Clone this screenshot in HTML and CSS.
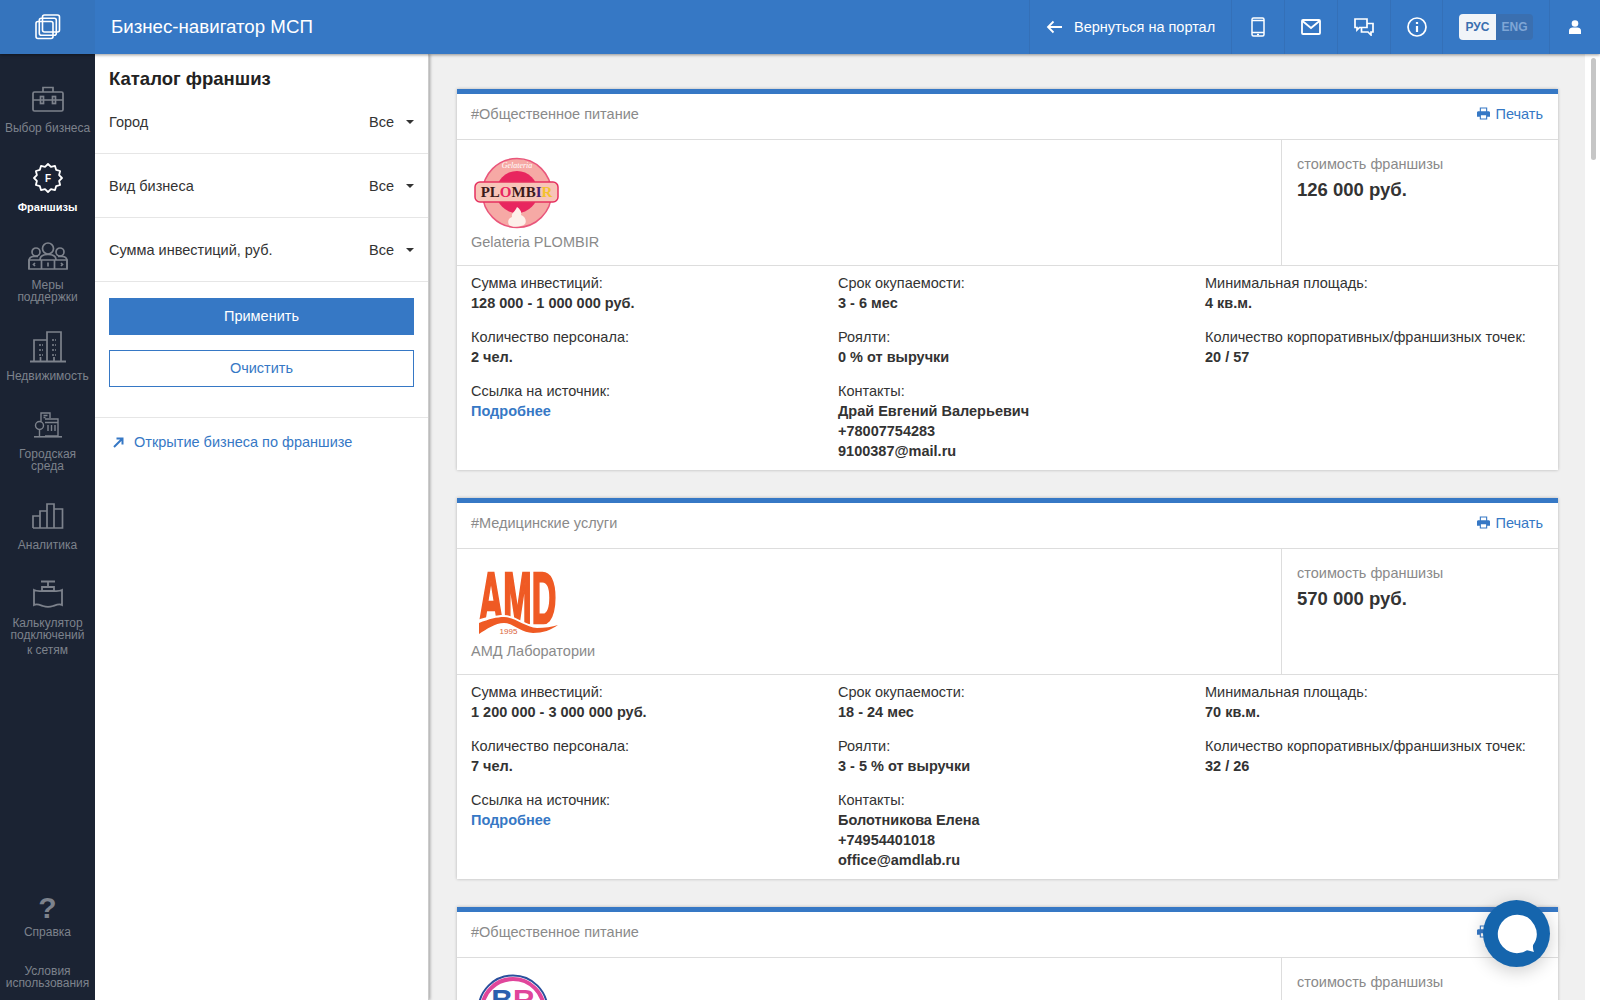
FILE: index.html
```html
<!DOCTYPE html>
<html lang="ru">
<head>
    <meta charset="UTF-8" />
    <title>Бизнес-навигатор МСП</title>
    <link rel="stylesheet" href="styles.css">
</head>
<body>
    <header class="topbar">
        <div class="brand">
            <svg width="26" height="26" viewBox="0 0 26 26" fill="none" stroke="#fff" stroke-width="1.6">
                <rect x="7.5" y="1" width="17" height="17" rx="2"/>
                <rect x="4.3" y="4.2" width="17" height="17" rx="2"/>
                <rect x="1" y="7.5" width="17" height="17" rx="2"/>
            </svg>
        </div>
        <div class="app-title">Бизнес-навигатор МСП</div>
        <a class="back-link">
            <svg width="16" height="14" viewBox="0 0 16 14" fill="none" stroke="#fff" stroke-width="1.8">
                <path d="M16 7H2M7.500 1.500 2 7l5.500 5.500"/>
            </svg>
            <span>Вернуться на портал</span>
        </a>
        <div class="top-icon top-icon-phone">
            <svg width="14" height="20" viewBox="0 0 14 20" fill="none" stroke="#fff" stroke-width="1.5">
                <rect x="1" y="1" width="12" height="18" rx="1.500"/>
                <path d="M1 3.500h12M1 15.500h12"/>
                <path d="M6 17.500h2"/>
            </svg>
        </div>
        <div class="top-icon">
            <svg width="20" height="16" viewBox="0 0 20 16" fill="none" stroke="#fff" stroke-width="1.8">
                <rect x="1" y="1" width="18" height="14" rx="1"/>
                <path d="M1.500 2 10 9l8.500-7"/>
            </svg>
        </div>
        <div class="top-icon">
            <svg width="20" height="18" viewBox="0 0 20 18" fill="none" stroke="#fff" stroke-width="1.7">
                <path d="M1 1h12v8.500H5.500L3 12V9.500H1z"/>
                <path d="M13 5.500h6v8.500h-2v3l-3-3H7.500V9.500"/>
            </svg>
        </div>
        <div class="top-icon top-icon-info">
            <svg width="20" height="20" viewBox="0 0 20 20" fill="none" stroke="#fff" stroke-width="1.7">
                <circle cx="10" cy="10" r="9"/>
                <path d="M10 9v6" stroke-width="2.200"/>
                <path d="M10 5v2" stroke-width="2.200"/>
            </svg>
        </div>
        <div class="lang">
            <span class="lang-item lang-active">РУС</span>
            <span class="lang-item">ENG</span>
        </div>
        <div class="top-user">
            <svg width="12" height="14" viewBox="0 0 12 14" fill="#fff">
                <circle cx="6" cy="3.500" r="3.300"/>
                <path d="M0 14v-3.500C0 8.500 2 7.500 3.500 7.500h5C10 7.500 12 8.500 12 10.500V14z"/>
            </svg>
        </div>
    </header>

    <div class="layout">
        <nav class="sidebar">
            <div class="nav-top">
                <a class="nav-item">
                    <div class="nav-icon">
                        <svg width="32" height="26" viewBox="0 0 32 26" fill="none" stroke="currentColor" stroke-width="1.700">
                            <rect x="1" y="6" width="30" height="19" rx="1.500"/>
                            <path d="M11 6V1.500h10V6M1 14h30"/>
                            <rect x="8.500" y="10.500" width="3" height="7"/>
                            <rect x="20.500" y="10.500" width="3" height="7"/>
                        </svg>
                    </div>
                    <div class="nav-label">Выбор бизнеса</div>
                </a>
                <a class="nav-item nav-active">
                    <div class="nav-icon">
                        <svg width="32" height="32" viewBox="-16 -16 32 32">
                            <polygon fill="none" stroke="currentColor" stroke-width="1.800" stroke-linejoin="round" points="0,-14 2.980,-11.110 7,-12.120 8.130,-8.130 12.120,-7 11.110,-2.980 14,0 11.110,2.980 12.120,7 8.130,8.130 7,12.120 2.980,11.110 0,14 -2.980,11.110 -7,12.120 -8.130,8.130 -12.120,7 -11.110,2.980 -14,0 -11.110,-2.980 -12.120,-7 -8.130,-8.130 -7,-12.120 -2.980,-11.110"/>
                            <text class="badge-letter" x="0" y="4" text-anchor="middle">F</text>
                        </svg>
                    </div>
                    <div class="nav-label">Франшизы</div>
                </a>
                <a class="nav-item">
                    <div class="nav-icon">
                        <svg width="40" height="28" viewBox="0 0 40 28" fill="none" stroke="currentColor" stroke-width="1.700">
                            <circle cx="20" cy="6.500" r="5.500"/>
                            <circle cx="8" cy="10" r="4"/>
                            <circle cx="32" cy="10" r="4"/>
                            <path d="M1 27v-8c0-3 2-4.500 5-4.500h4M39 27v-8c0-3-2-4.500-5-4.500h-4M12 18c0-4 3-5.500 8-5.500s8 1.500 8 5.500"/>
                            <path d="M1 18h38v9H1zM13.500 18v9M26.500 18v9"/>
                            <path d="M7 21l-1.500 1.500L7 24M33 21l1.500 1.500L33 24M20 20.500v4"/>
                        </svg>
                    </div>
                    <div class="nav-label">Меры<br>поддержки</div>
                </a>
                <a class="nav-item">
                    <div class="nav-icon">
                        <svg width="36" height="32" viewBox="0 0 36 32" fill="none" stroke="currentColor" stroke-width="1.700">
                            <path d="M4 30V9h13M17 30V1h14v29"/>
                            <path d="M0 30.500h36" stroke-width="2"/>
                            <path d="M9 14h4M9 19h4M9 24h4M22 9h4M22 14h4M22 19h4M22 24h4" stroke-dasharray="2 1"/>
                            <path d="M10.500 26v4M24 26v4"/>
                        </svg>
                    </div>
                    <div class="nav-label">Недвижимость</div>
                </a>
                <a class="nav-item">
                    <div class="nav-icon">
                        <svg width="28" height="26" viewBox="0 0 28 26" fill="none" stroke="currentColor" stroke-width="1.400">
                            <path d="M7 9V1h9v5"/>
                            <path d="M9.500 3.500h4M9.500 5.500h2"/>
                            <circle cx="5.500" cy="13.500" r="4"/>
                            <path d="M5.500 17.500V24"/>
                            <path d="M11 7h13v17H11M11 10.500h13"/>
                            <path d="M14 13v6M17.500 13v6M21 13v6"/>
                            <path d="M0 24.800h28" stroke-width="1.600"/>
                        </svg>
                    </div>
                    <div class="nav-label">Городская<br>среда</div>
                </a>
                <a class="nav-item">
                    <div class="nav-icon">
                        <svg width="32" height="26" viewBox="0 0 32 26" fill="none" stroke="currentColor" stroke-width="1.700">
                            <path d="M1 25V13h7v12M8 25V8h7v17M15 25V1h7v24M22 25V6h8.500v19zM1 25h30"/>
                        </svg>
                    </div>
                    <div class="nav-label">Аналитика</div>
                </a>
                <a class="nav-item">
                    <div class="nav-icon">
                        <svg width="30" height="28" viewBox="0 0 30 28" fill="none" stroke="currentColor" stroke-width="1.800">
                            <path d="M8 1.500h14M15 1.500V7M9 7h12v4H9z"/>
                            <path d="M1 10v15c3-1.500 6 0 9 1 3 1 7 1 10 0 3-1 6-2.500 9-1V10c-3 1.500-6 1-8 1H9c-2 0-5 .500-8-1z"/>
                        </svg>
                    </div>
                    <div class="nav-label">Калькулятор<br>подключений<span class="nav-label-last">к сетям</span></div>
                </a>
            </div>
            <div class="nav-bottom">
                <a class="nav-help">
                    <div class="help-mark">?</div>
                    <div class="nav-label">Справка</div>
                </a>
                <a class="nav-terms">Условия<br>использования</a>
            </div>
        </nav>

        <aside class="panel">
            <h1 class="panel-title">Каталог франшиз</h1>
            <div class="filter">
                <span>Город</span>
                <span class="filter-value">Все<i class="caret"></i></span>
            </div>
            <div class="filter">
                <span>Вид бизнеса</span>
                <span class="filter-value">Все<i class="caret"></i></span>
            </div>
            <div class="filter">
                <span>Сумма инвестиций, руб.</span>
                <span class="filter-value">Все<i class="caret"></i></span>
            </div>
            <div class="panel-actions">
                <button class="btn-apply">Применить</button>
                <button class="btn-clear">Очистить</button>
            </div>
            <a class="panel-link">
                <svg width="11" height="11" viewBox="0 0 11 11" fill="none" stroke="#3678c5" stroke-width="2">
                    <path d="M1 10 9 2M3.500 1.500h6v6"/>
                </svg>
                <span>Открытие бизнеса по франшизе</span>
            </a>
        </aside>

        <main class="content">
            <section class="card">
                <div class="card-head">
                    <span class="card-tag">#Общественное питание</span>
                    <a class="print">
                        <svg width="13" height="13" viewBox="0 0 14 13" fill="#3678c5">
                            <path d="M3 0h8v4H9.800V1.200H4.200V4H3zM0 5.500C0 4.700.6 4 1.500 4h11c.8 0 1.500.7 1.500 1.500V10h-3v3H3v-3H0zM4.200 8.500v3.300h5.600V8.500z"/>
                        </svg>
                        Печать
                    </a>
                </div>
                <div class="card-top">
                    <div class="card-brand">
                        <svg class="brand-logo" width="90" height="76" viewBox="0 0 90 76">
                            <circle cx="46" cy="39" r="34.500" fill="#f6a9a5" stroke="#e9567b" stroke-width="1.500"/>
                            <circle cx="46" cy="38" r="21" fill="#e8265f"/>
                            <text class="plombir-script" x="46" y="14" text-anchor="middle">Gelateria</text>
                            <rect x="4" y="28" width="83" height="20" rx="5" fill="#f8c4b8" stroke="#e5305f" stroke-width="1.500"/>
                            <text class="plombir-word" x="45.500" y="43" text-anchor="middle"><tspan fill="#3c1a1a">PL</tspan><tspan fill="#e8265f">O</tspan><tspan fill="#3c1a1a">MB</tspan><tspan fill="#43206f">I</tspan><tspan fill="#f2c230">R</tspan></text>
                            <path d="M38 71c-2-4 0-7 3-8-1-4 3-5 5-10 3 2 5 5 4 8 4 1 6 6 4 9-3 3-13 4-16 1z" fill="#fdf0ea"/>
                        </svg>
                        <div class="brand-name">Gelateria PLOMBIR</div>
                    </div>
                    <div class="card-price">
                        <div class="price-label">стоимость франшизы</div>
                        <div class="price-value">126 000 руб.</div>
                    </div>
                </div>
                <div class="card-details">
                    <div class="detail"><div>Сумма инвестиций:</div><b>128 000 - 1 000 000 руб.</b></div>
                    <div class="detail"><div>Срок окупаемости:</div><b>3 - 6 мес</b></div>
                    <div class="detail"><div>Минимальная площадь:</div><b>4 кв.м.</b></div>
                    <div class="detail"><div>Количество персонала:</div><b>2 чел.</b></div>
                    <div class="detail"><div>Роялти:</div><b>0 % от выручки</b></div>
                    <div class="detail"><div>Количество корпоративных/франшизных точек:</div><b>20 / 57</b></div>
                    <div class="detail"><div>Ссылка на источник:</div><a class="more">Подробнее</a></div>
                    <div class="detail"><div>Контакты:</div><b>Драй Евгений Валерьевич</b><b>+78007754283</b><b>9100387@mail.ru</b></div>
                </div>
            </section>

            <section class="card">
                <div class="card-head">
                    <span class="card-tag">#Медицинские услуги</span>
                    <a class="print">
                        <svg width="13" height="13" viewBox="0 0 14 13" fill="#3678c5">
                            <path d="M3 0h8v4H9.800V1.200H4.200V4H3zM0 5.500C0 4.700.6 4 1.500 4h11c.8 0 1.500.7 1.500 1.500V10h-3v3H3v-3H0zM4.200 8.500v3.300h5.600V8.500z"/>
                        </svg>
                        Печать
                    </a>
                </div>
                <div class="card-top">
                    <div class="card-brand">
                        <svg class="brand-logo" width="90" height="76" viewBox="0 0 90 76">
                            <text class="amd-word" x="0" y="0" text-anchor="middle" transform="translate(46.500 60) scale(1 2.100)">AMD</text>
                            <path d="M0 76V59C14 54 25 52 33 52c11 0 21 10 33 11 8 0 15-1 24-5v18z" fill="#fff"/>
                            <path d="M8 60C18 56 26 54 33 54c11 0 21 10 33 11 8 0 15-1 21-3-7 5-15 8-25 8-12 0-20-10-29-10-9 0-17 6-25 11z" fill="#ef5a24"/>
                            <text class="amd-year" x="37.500" y="71" text-anchor="middle">1995</text>
                        </svg>
                        <div class="brand-name">АМД Лаборатории</div>
                    </div>
                    <div class="card-price">
                        <div class="price-label">стоимость франшизы</div>
                        <div class="price-value">570 000 руб.</div>
                    </div>
                </div>
                <div class="card-details">
                    <div class="detail"><div>Сумма инвестиций:</div><b>1 200 000 - 3 000 000 руб.</b></div>
                    <div class="detail"><div>Срок окупаемости:</div><b>18 - 24 мес</b></div>
                    <div class="detail"><div>Минимальная площадь:</div><b>70 кв.м.</b></div>
                    <div class="detail"><div>Количество персонала:</div><b>7 чел.</b></div>
                    <div class="detail"><div>Роялти:</div><b>3 - 5 % от выручки</b></div>
                    <div class="detail"><div>Количество корпоративных/франшизных точек:</div><b>32 / 26</b></div>
                    <div class="detail"><div>Ссылка на источник:</div><a class="more">Подробнее</a></div>
                    <div class="detail"><div>Контакты:</div><b>Болотникова Елена</b><b>+74954401018</b><b>office@amdlab.ru</b></div>
                </div>
            </section>

            <section class="card">
                <div class="card-head">
                    <span class="card-tag">#Общественное питание</span>
                    <a class="print">
                        <svg width="13" height="13" viewBox="0 0 14 13" fill="#3678c5">
                            <path d="M3 0h8v4H9.800V1.200H4.200V4H3zM0 5.500C0 4.700.6 4 1.500 4h11c.8 0 1.500.7 1.500 1.500V10h-3v3H3v-3H0zM4.200 8.500v3.300h5.600V8.500z"/>
                        </svg>
                        Печать
                    </a>
                </div>
                <div class="card-top">
                    <div class="card-brand">
                        <svg class="brand-logo" width="90" height="76" viewBox="0 0 90 76">
                            <circle cx="42" cy="38" r="34.500" fill="#fff" stroke="#2a4f9c" stroke-width="2"/>
                            <circle cx="42" cy="38" r="31" fill="none" stroke="#e0469b" stroke-width="4"/>
                            <text class="br-word" x="42" y="38" text-anchor="middle"><tspan fill="#2a5fae">B</tspan><tspan fill="#e0469b">R</tspan></text>
                        </svg>
                    </div>
                    <div class="card-price">
                        <div class="price-label">стоимость франшизы</div>
                    </div>
                </div>
            </section>
        </main>
        <div class="scroll-track"><div class="scroll-thumb"></div></div>
    </div>

    <div class="chat-btn">
        <svg width="40" height="40" viewBox="0 0 46 46" fill="#fff">
            <path d="M23 1a22 22 0 1 0 11.500 40.700c2.500.5 5 1.500 8 2-1-2.500-1.500-5-1-8A22 22 0 0 0 23 1z"/>
        </svg>
    </div>
</body>
</html>
```

FILE: styles.css
```css
* {
    box-sizing: border-box;
}
html, body {
    height: 100%;
}
body {
    margin: 0;
    display: flex;
    flex-direction: column;
    overflow: hidden;
    background-color: #f0f0f0;
    font-family: "Liberation Sans", Arial, sans-serif;
    font-size: 14.500px;
    color: #333;
}
a {
    color: inherit;
    text-decoration: none;
}

/* top bar */
.topbar {
    height: 54px;
    flex-shrink: 0;
    display: flex;
    align-items: stretch;
    background-color: #3678c5;
    color: #fff;
    box-shadow: 0 1px 3px rgba(0, 0, 0, 0.4);
    position: relative;
    z-index: 3;
}
.brand {
    width: 95px;
    display: flex;
    align-items: center;
    justify-content: center;
    background-color: #3574bd;
}
.app-title {
    flex: 1;
    padding-left: 16px;
    line-height: 54px;
    font-size: 18.700px;
}
.back-link {
    width: 202px;
    display: flex;
    align-items: center;
    gap: 12px;
    padding-left: 16px;
    font-size: 14.500px;
    border-left: 1px solid #3470b8;
}
.top-icon {
    width: 53px;
    display: flex;
    align-items: center;
    justify-content: center;
    border-left: 1px solid #3470b8;
}
.top-icon-info {
    width: 52px;
}
.lang {
    width: 107px;
    display: flex;
    align-items: center;
    justify-content: center;
    border-left: 1px solid #3470b8;
}
.lang-item {
    width: 37px;
    height: 26px;
    line-height: 26px;
    text-align: center;
    font-size: 12px;
    font-weight: 700;
    color: #7fa6d6;
    background-color: #3a6fb0;
}
.lang-item:last-child {
    border-radius: 0 4px 4px 0;
}
.lang-active {
    color: #3a6fb0;
    background-color: #f1f4f8;
    border-radius: 4px 0 0 4px;
}
.top-user {
    width: 51px;
    display: flex;
    align-items: center;
    justify-content: center;
    border-left: 1px solid #3470b8;
}

/* main area */
.layout {
    flex: 1;
    min-height: 0;
    display: flex;
}

/* left dark menu */
.sidebar {
    width: 95px;
    flex-shrink: 0;
    display: flex;
    flex-direction: column;
    justify-content: space-between;
    background-color: #1b2333;
    color: #7d828c;
    position: relative;
    z-index: 2;
}
.nav-top {
    padding-top: 28px;
}
.nav-item {
    display: block;
    padding-bottom: 26.500px;
    text-align: center;
}
.nav-active {
    color: #fff;
}
.nav-icon {
    height: 34px;
    margin-bottom: 6px;
    display: flex;
    align-items: center;
    justify-content: center;
}
.nav-label {
    font-size: 12px;
    line-height: 12px;
}
.nav-active .nav-label {
    font-size: 11px;
    font-weight: 700;
}
.nav-label-last {
    display: block;
    margin-top: 3px;
}
.badge-letter {
    font-size: 10px;
    font-weight: 700;
    fill: currentColor;
}
.nav-bottom {
    text-align: center;
}
.nav-help {
    display: block;
    margin-bottom: 28px;
}
.help-mark {
    height: 28px;
    line-height: 28px;
    margin-bottom: 4px;
    font-size: 30px;
    font-weight: 700;
}
.nav-terms {
    display: block;
    height: 34px;
    font-size: 12px;
    line-height: 11.500px;
}

/* filter panel */
.panel {
    width: 334px;
    flex-shrink: 0;
    background-color: #fff;
    border-right: 1px solid #ccc;
    box-shadow: 1px 0 3px rgba(0, 0, 0, 0.35);
    position: relative;
    z-index: 1;
}
.panel-title {
    margin: 0;
    padding: 15px 14px 0;
    height: 36px;
    font-size: 18.500px;
    line-height: 20px;
    font-weight: 700;
    color: #222;
}
.filter {
    height: 64px;
    padding: 0 14px;
    display: flex;
    align-items: center;
    justify-content: space-between;
    border-bottom: 1px solid #e6e6e6;
}
.filter-value {
    display: flex;
    align-items: center;
}
.caret {
    margin-left: 12px;
    border-top: 4px solid #333;
    border-left: 4px solid transparent;
    border-right: 4px solid transparent;
}
.panel-actions {
    padding: 16px 14px 30px;
    display: flex;
    flex-direction: column;
    gap: 15px;
    border-bottom: 1px solid #e6e6e6;
}
.btn-apply,
.btn-clear {
    height: 37px;
    padding-bottom: 3px;
    font-family: inherit;
    font-size: 14.500px;
    cursor: pointer;
}
.btn-apply {
    border: 1px solid #3678c5;
    background-color: #3678c5;
    color: #fff;
}
.btn-clear {
    border: 1px solid #3678c5;
    background-color: #fff;
    color: #3678c5;
}
.panel-link {
    display: flex;
    align-items: center;
    gap: 10px;
    padding: 16px 0 0 18px;
    color: #3678c5;
}

/* cards */
.content {
    flex: 1;
    min-width: 0;
    padding: 35px 42px 0 28px;
    overflow: hidden;
}
.card {
    margin-bottom: 28px;
    background-color: #fff;
    border-top: 5px solid #3678c5;
    box-shadow: 0 0 3px rgba(0, 0, 0, 0.25);
}
.card-head {
    height: 46px;
    padding: 0 15px 6px 14px;
    display: flex;
    align-items: center;
    justify-content: space-between;
    border-bottom: 1px solid #ddd;
}
.card-tag {
    color: #8a8a8a;
}
.print {
    display: flex;
    align-items: center;
    gap: 5px;
    color: #3678c5;
}
.card-top {
    height: 126px;
    display: flex;
    border-bottom: 1px solid #ddd;
}
.card-brand {
    flex: 1;
    padding: 14px 14px 0;
}
.brand-logo {
    display: block;
    overflow: visible;
}
.brand-name {
    margin-top: 4px;
    color: #8a8a8a;
}
.card-price {
    width: 277px;
    padding: 16px 15px 0;
    border-left: 1px solid #ddd;
}
.price-label {
    line-height: 17px;
    color: #8a8a8a;
}
.price-value {
    margin-top: 7px;
    font-size: 18.500px;
    line-height: 20px;
    font-weight: 700;
}
.plombir-word {
    font-family: "Liberation Serif", serif;
    font-size: 15px;
    font-weight: 700;
}
.plombir-script {
    font-family: "Liberation Serif", serif;
    font-style: italic;
    font-size: 8px;
    fill: #fff;
}
.amd-word {
    font-size: 34px;
    font-weight: 700;
    fill: #ef5a24;
    stroke: #ef5a24;
    stroke-width: 1.300px;
}
.amd-year {
    font-size: 8px;
    fill: #d9623a;
}
.br-word {
    font-size: 30px;
    font-weight: 700;
}
.card-details {
    padding: 7px 15px 9px 14px;
    display: grid;
    grid-template-columns: 367px 367px 1fr;
    row-gap: 14px;
    line-height: 20px;
}
.detail b {
    display: block;
}
.more {
    display: block;
    font-weight: 700;
    color: #3678c5;
}

/* decorative page scrollbar */
.scroll-track {
    position: absolute;
    top: 54px;
    right: 0;
    bottom: 0;
    width: 15px;
    background-color: #fff;
}
.scroll-thumb {
    width: 5px;
    height: 102px;
    margin: 4px 0 0 6px;
    border-radius: 3px;
    background-color: #c6c6c6;
}

/* chat button */
.chat-btn {
    position: fixed;
    left: 1483px;
    top: 900px;
    width: 67px;
    height: 67px;
    display: flex;
    align-items: center;
    justify-content: center;
    border-radius: 50%;
    background-color: #1565ad;
    box-shadow: 0 4px 18px rgba(0, 0, 0, 0.2);
    z-index: 5;
}
```
